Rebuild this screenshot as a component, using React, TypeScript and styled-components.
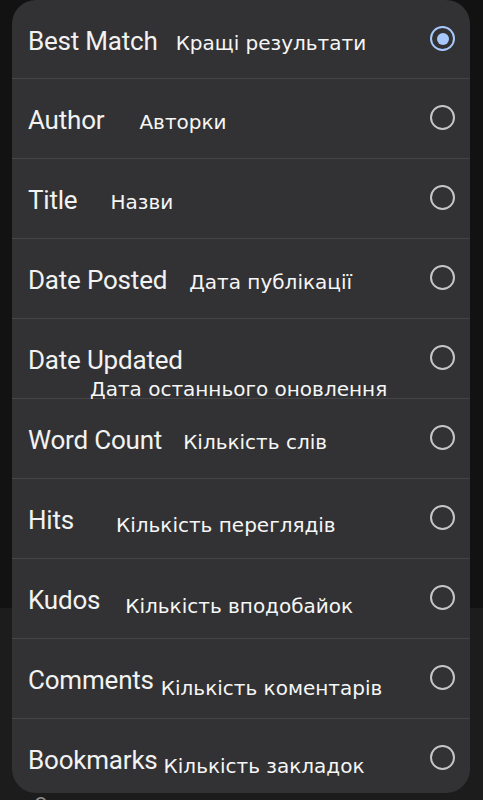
import React from "react";
import styled, { createGlobalStyle } from "styled-components";

const Global = createGlobalStyle`
  html, body { margin: 0; padding: 0; background: #121212; }
  body { width: 483px; height: 800px; overflow: hidden; font-family: Roboto, "Noto Sans", sans-serif; }
  #root { width: 483px; height: 800px; }
`;

const Screen = styled.div`
  position: relative;
  width: 483px;
  height: 800px;
  display: flex;
  flex-direction: column;
  overflow: hidden;
`;

const Scrim = styled.div`
  height: 608px;
  flex-shrink: 0;
  background: #121212;
`;

const UnderPage = styled.div`
  flex: 1;
  min-height: 0;
  overflow: hidden;
  background: #1c1c1c;
  padding: 26px 0 0 34px;
`;

const UnderText = styled.div`
  font-family: Roboto, sans-serif;
  font-size: 20px;
  color: #8d8d8d;
  line-height: 24px;
  margin-top: 159px;
`;

const Dialog = styled.div`
  position: absolute;
  left: 12px;
  top: 0;
  width: 458px;
  height: 793px;
  background: #323234;
  border-radius: 24px;
  overflow: hidden;
`;

const Row = styled.div`
  box-sizing: border-box;
  height: 80px;
  border-top: 1px solid #454547;
  display: flex;
  align-items: flex-start;
  padding: 26px 15px 0 16px;
  &:first-child {
    height: 78px;
    border-top: none;
  }
`;

const Texts = styled.div`
  flex: 1;
  line-height: 30px;
  white-space: nowrap;
`;

const Label = styled.span`
  font-family: Roboto, sans-serif;
  font-size: 26px;
  color: #f2f2f2;
  letter-spacing: -0.2px;
`;

const Translation = styled.span<{ $gap: number; $shift: number }>`
  font-family: "DejaVu Sans", sans-serif;
  font-size: 20px;
  color: #f6f6f6;
  margin-left: ${(p) => p.$gap}px;
  vertical-align: ${(p) => -p.$shift}px;
`;

const WrappedTranslation = styled.div<{ $indent: number }>`
  font-family: "DejaVu Sans", sans-serif;
  font-size: 20px;
  line-height: 24px;
  color: #f6f6f6;
  padding-left: ${(p) => p.$indent}px;
  margin-top: -2px;
`;

const Radio = styled.div<{ $checked: boolean }>`
  box-sizing: border-box;
  width: 25px;
  height: 25px;
  border-radius: 50%;
  border: 2.5px solid ${(p) => (p.$checked ? "#a8c7fa" : "#c6c6c8")};
  display: flex;
  align-items: center;
  justify-content: center;
  flex-shrink: 0;
  &::after {
    content: "";
    display: ${(p) => (p.$checked ? "block" : "none")};
    width: 12px;
    height: 12px;
    border-radius: 50%;
    background: #a8c7fa;
  }
`;

type Opt = { en: string; uk: string; gap: number; shift: number; wrap?: number; checked?: boolean };

const options: Opt[] = [
  { en: "Best Match", uk: "Кращі результати", gap: 18, shift: 0, checked: true },
  { en: "Author", uk: "Авторки", gap: 35, shift: 0 },
  { en: "Title", uk: "Назви", gap: 33, shift: 0 },
  { en: "Date Posted", uk: "Дата публікації", gap: 22, shift: 0 },
  { en: "Date Updated", uk: "Дата останнього оновлення", gap: 0, shift: 0, wrap: 62 },
  { en: "Word Count", uk: "Кількість слів", gap: 21, shift: 0 },
  { en: "Hits", uk: "Кількість переглядів", gap: 42, shift: 3 },
  { en: "Kudos", uk: "Кількість вподобайок", gap: 25, shift: 4 },
  { en: "Comments", uk: "Кількість коментарів", gap: 7, shift: 6 },
  { en: "Bookmarks", uk: "Кількість закладок", gap: 6, shift: 4 },
];

export default function App() {
  return (
    <>
      <Global />
      <Screen>
        <Scrim />
        <UnderPage>
          <UnderText>Crossovers</UnderText>
        </UnderPage>
        <Dialog>
          {options.map((o) => (
            <Row key={o.en}>
              <Texts>
                <Label>{o.en}</Label>
                {o.wrap !== undefined ? (
                  <WrappedTranslation $indent={o.wrap}>{o.uk}</WrappedTranslation>
                ) : (
                  <Translation $gap={o.gap} $shift={o.shift}>{o.uk}</Translation>
                )}
              </Texts>
              <Radio $checked={!!o.checked} />
            </Row>
          ))}
        </Dialog>
      </Screen>
    </>
  );
}
